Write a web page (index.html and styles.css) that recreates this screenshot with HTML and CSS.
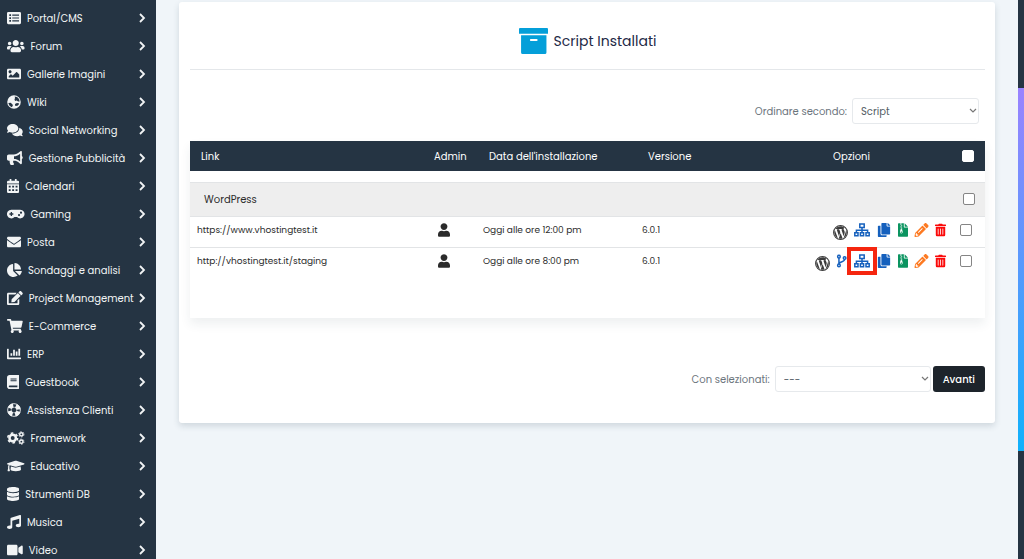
FILE: index.html
```html
<!DOCTYPE html>
<html lang="it">
<head>
<meta charset="utf-8">
<title>Script Installati</title>
<link rel="stylesheet" href="styles.css">
</head>
<body>
<svg class="sprite" aria-hidden="true">
  <symbol id="chevron" viewBox="0 0 8 10"><path d="M2 1l4 4-4 4" fill="none" stroke="currentColor" stroke-width="1.8"/></symbol>
  <symbol id="user" viewBox="0 0 448 512"><path d="M224 256c70.7 0 128-57.3 128-128S294.7 0 224 0 96 57.3 96 128s57.3 128 128 128zm89.6 32h-16.7c-22.2 10.2-46.9 16-72.9 16s-50.6-5.8-72.9-16h-16.7C60.2 288 0 348.2 0 422.4V464c0 26.5 21.5 48 48 48h352c26.5 0 48-21.5 48-48v-41.6c0-74.2-60.2-134.4-134.4-134.4z"/></symbol>
  <symbol id="wordpress" viewBox="0 0 512 512"><path d="M61.7 169.4l101.5 278C92.2 413 43.3 340.2 43.3 256c0-30.9 6.6-60.1 18.4-86.6zm337.9 75.9c0-26.3-9.4-44.5-17.5-58.7-10.8-17.5-20.9-32.4-20.9-49.9 0-19.6 14.8-37.8 35.7-37.8.9 0 1.8.1 2.8.2-37.9-34.7-88.3-55.9-143.7-55.9-74.3 0-139.7 38.1-177.8 95.9 5 .2 9.7.3 13.7.3 22.2 0 56.7-2.7 56.7-2.7 11.5-.7 12.8 16.2 1.4 17.5 0 0-11.5 1.3-24.3 2l77.5 230.4L249.8 247l-33.1-90.8c-11.5-.7-22.3-2-22.3-2-11.5-.7-10.1-18.2 1.3-17.5 0 0 35.1 2.7 56 2.7 22.2 0 56.7-2.7 56.7-2.7 11.5-.7 12.8 16.2 1.4 17.5 0 0-11.5 1.3-24.3 2l76.9 228.7 21.2-70.9c9-29.4 16-50.5 16-68.7zm-139.9 29.3l-63.8 185.5c19.1 5.6 39.2 8.7 60.1 8.7 24.8 0 48.5-4.3 70.6-12.1-.6-.9-1.1-1.9-1.5-2.9l-65.4-179.2zm183-120.7c.9 6.8 1.4 14 1.4 21.9 0 21.6-4 45.8-16.2 76.2l-65 187.9C426.2 403 468.7 334.5 468.7 256c0-37-9.4-71.8-26-102.1z"/><circle cx="256" cy="256" r="236" fill="none" stroke="currentColor" stroke-width="36"/></symbol>
  <symbol id="branch" viewBox="0 0 12 16"><g fill="none" stroke="currentColor" stroke-width="1.7"><circle cx="2.500" cy="3" r="1.500"/><circle cx="2.500" cy="13" r="1.500"/><circle cx="9" cy="4.600" r="1.500"/><path d="M2.500 4.500v7M9 6.100c0 3.600-5.500 1.800-6.500 5.200"/></g></symbol>
  <symbol id="sitemap" viewBox="0 0 16 14"><g fill="none" stroke="currentColor" stroke-width="1.500"><path d="M5.800 1h4.400v3.400H5.800zM.8 9.800h3.200v3H.8zM12 9.800h3.200v3H12zM6.400 9.800h3.200v3H6.400zM8 4.400v5.400M2.400 9.800V7.200h11.200v2.600"/></g></symbol>
  <symbol id="copy" viewBox="0 0 448 512"><path d="M320 448v40c0 13.300-10.700 24-24 24H24c-13.300 0-24-10.700-24-24V120c0-13.300 10.700-24 24-24h72v296c0 30.900 25.100 56 56 56zm0-344V0H152c-13.300 0-24 10.700-24 24v368c0 13.300 10.700 24 24 24h272c13.300 0 24-10.700 24-24V128H344c-13.200 0-24-10.800-24-24zm121-31L375 7a24 24 0 0 0-17-7h-6v96h96v-6a24 24 0 0 0-7-17z"/></symbol>
  <symbol id="zip" viewBox="0 0 384 512"><path fill-rule="evenodd" d="M24 0h72v32h32V0h96v136c0 13 11 24 24 24h136v328c0 13-11 24-24 24H24c-13 0-24-11-24-24V24C0 11 11 0 24 0zm232 0 128 128H256zM96 32v32h32V32zm32 32v32h32V64zM96 96v32h32V96zm32 32v32h32v-32zM96 160v32h32v-32zm32 32v32h32v-32zM96 224l-20 102c-8 38 18 66 52 66s60-28 52-66l-18-84c-2-10-6-18-18-18zm32 88c22 0 34 10 34 26s-14 26-34 26-34-10-34-26 14-26 34-26z"/></symbol>
  <symbol id="pencil" viewBox="0 0 512 512"><path fill-rule="evenodd" d="M498 142l-46 46c-5 5-12 5-17 0L324 77c-5-5-5-12 0-17l46-46c19-19 49-19 68 0l60 60c19 19 19 49 0 68zM284 100L22 362 0 484c-3 16 12 31 28 28l122-21 262-262c5-5 5-12 0-17L301 100c-5-5-12-5-17 0zM124 340l154-154 22 22-154 154zM88 424h48v36l-65 12-31-31 12-65h36z"/></symbol>
  <symbol id="trash" viewBox="0 0 448 512"><path d="M32 464a48 48 0 0 0 48 48h288a48 48 0 0 0 48-48V128H32zm272-256a16 16 0 0 1 32 0v224a16 16 0 0 1-32 0zm-96 0a16 16 0 0 1 32 0v224a16 16 0 0 1-32 0zm-96 0a16 16 0 0 1 32 0v224a16 16 0 0 1-32 0zM432 32H312l-9.400-18.700A24 24 0 0 0 281.100 0H166.800a23.700 23.700 0 0 0-21.400 13.300L136 32H16A16 16 0 0 0 0 48v32a16 16 0 0 0 16 16h416a16 16 0 0 0 16-16V48a16 16 0 0 0-16-16z"/></symbol>
</svg>
<div class="layout">
  <nav class="sidebar" aria-label="Categorie">
    <a href="#"><svg viewBox="0 0 512 512"><path fill-rule="evenodd" d="M48 32h416a48 48 0 0 1 48 48v352a48 48 0 0 1-48 48H48a48 48 0 0 1-48-48V80a48 48 0 0 1 48-48zM84 120v64h64v-64zm0 104v64h64v-64zm0 104v64h64v-64zM192 132v40h248v-40zm0 104v40h248v-40zm0 104v40h248v-40z"/></svg><span>Portal/CMS</span><svg class="chev"><use href="#chevron"/></svg></a>
    <a href="#"><svg viewBox="0 0 640 512"><path d="M96 224c35.300 0 64-28.700 64-64s-28.700-64-64-64-64 28.700-64 64 28.700 64 64 64zm448 0c35.300 0 64-28.700 64-64s-28.700-64-64-64-64 28.700-64 64 28.700 64 64 64zm32 32h-64c-17.600 0-33.500 7.100-45.100 18.600 40.300 22.100 68.900 62 75.100 109.400h66c17.700 0 32-14.300 32-32v-32c0-35.300-28.700-64-64-64zm-256 0c61.900 0 112-50.100 112-112S381.900 32 320 32 208 82.100 208 144s50.100 112 112 112zm76.800 32h-8.300c-20.800 10-43.900 16-68.500 16s-47.600-6-68.500-16h-8.300C179.600 288 128 339.600 128 403.200V432c0 26.500 21.500 48 48 48h288c26.500 0 48-21.500 48-48v-28.800c0-63.600-51.600-115.200-115.200-115.200zm-223.700-13.400C161.500 263.100 145.600 256 128 256H64c-35.300 0-64 28.700-64 64v32c0 17.700 14.300 32 32 32h65.900c6.300-47.400 34.900-87.300 75.200-109.400z"/></svg><span>Forum</span><svg class="chev"><use href="#chevron"/></svg></a>
    <a href="#"><svg viewBox="0 0 512 512"><path d="M464 448H48c-26.500 0-48-21.500-48-48V112c0-26.500 21.500-48 48-48h416c26.500 0 48 21.500 48 48v288c0 26.500-21.500 48-48 48zM112 120c-30.900 0-56 25.100-56 56s25.100 56 56 56 56-25.100 56-56-25.100-56-56-56zM64 384h384V272l-87.500-87.500c-4.700-4.700-12.300-4.700-17 0L208 320l-55.500-55.500c-4.700-4.700-12.300-4.700-17 0L64 336v48z"/></svg><span>Gallerie Imagini</span><svg class="chev"><use href="#chevron"/></svg></a>
    <a href="#"><svg viewBox="0 0 512 512"><path fill-rule="evenodd" d="M256 8a248 248 0 1 1 0 496 248 248 0 0 1 0-496zM280 54l90 20 70 76 24 90-60 0-50-40-60 16-20-60 20-46zM48 290l86-4 70 60 10 50-40 50-80-50zM290 340l40-40 80-10 36 40-60 60-80 10z"/></svg><span>Wiki</span><svg class="chev"><use href="#chevron"/></svg></a>
    <a href="#"><svg viewBox="0 0 576 512"><path d="M416 192c0-88.400-93.100-160-208-160S0 103.600 0 192c0 34.300 14.100 65.900 38 92-13.400 30.200-35.500 54.200-35.800 54.500-2.200 2.300-2.800 5.700-1.500 8.700S4.800 352 8 352c36.600 0 66.900-12.300 88.700-25 32.200 15.700 70.300 25 111.300 25 114.900 0 208-71.600 208-160zm122 220c23.900-26 38-57.700 38-92 0-66.900-53.500-124.200-129.300-148.100.9 6.600 1.300 13.300 1.300 20.100 0 105.900-107.700 192-240 192-10.800 0-21.300-.8-31.700-1.900C207.800 439.600 281.800 480 368 480c41 0 79.100-9.200 111.300-25 21.800 12.700 52.100 25 88.700 25 3.200 0 6.100-1.900 7.300-4.800 1.300-2.900.7-6.300-1.500-8.700-.3-.3-22.400-24.200-35.800-54.500z"/></svg><span>Social Networking</span><svg class="chev"><use href="#chevron"/></svg></a>
    <a href="#"><svg viewBox="0 0 576 512"><path d="M576 240c0-23.600-13-44-32-55.100V32c0-8.700-7-32-32-32-7.100 0-14.200 2.400-20 7l-85 68C364.300 109.200 310.700 128 256 128H64c-35.300 0-64 28.700-64 64v96c0 35.400 28.700 64 64 64h33.700c-1.400 10.500-2.200 21.100-2.200 32 0 39.800 9.300 77.400 25.600 110.900 5.200 10.700 16.500 17.100 28.400 17.100h74.300c26 0 41.700-29.800 25.900-50.600-16.400-21.500-26.200-48.400-26.200-77.400 0-11.100 1.600-21.800 4.400-32H256c54.700 0 108.300 18.800 151 53l85 68a32 32 0 0 0 20 7c24.900 0 32-22.800 32-32V295.100c19-11.100 32-31.500 32-55.100zm-96 141.400L447 355C393 311.800 325.100 288 256 288v-96c69.100 0 137-23.800 191-67l33-26.400v282.800z"/></svg><span>Gestione Pubblicità</span><svg class="chev"><use href="#chevron"/></svg></a>
    <a href="#"><svg viewBox="0 0 448 512"><path fill-rule="evenodd" d="M48 64h48V12c0-7 5-12 12-12h40c7 0 12 5 12 12v52h128V12c0-7 5-12 12-12h40c7 0 12 5 12 12v52h48a48 48 0 0 1 48 48v48H0v-48a48 48 0 0 1 48-48zM0 192h448v272a48 48 0 0 1-48 48H48a48 48 0 0 1-48-48zm64 52v64h70v-64zm125 0v64h70v-64zm125 0v64h70v-64zM64 372v64h70v-64zm125 0v64h70v-64zm125 0v64h70v-64z"/></svg><span>Calendari</span><svg class="chev"><use href="#chevron"/></svg></a>
    <a href="#"><svg viewBox="0 0 640 512"><path fill-rule="evenodd" d="M160 96h320a160 160 0 1 1-114 272h-92A160 160 0 1 1 160 96zm-24 88v48H88v48h48v48h48v-48h48v-48h-48v-48zm304 72a40 40 0 1 0 0 80 40 40 0 0 0 0-80zm72-88a40 40 0 1 0 0 80 40 40 0 0 0 0-80z"/></svg><span>Gaming</span><svg class="chev"><use href="#chevron"/></svg></a>
    <a href="#"><svg viewBox="0 0 512 512"><path d="M502.300 190.800c3.900-3.100 9.700-.2 9.700 4.700V400c0 26.500-21.500 48-48 48H48c-26.500 0-48-21.500-48-48V195.600c0-5 5.700-7.800 9.700-4.700 22.400 17.400 52.100 39.500 154.100 113.600 21.100 15.400 56.700 47.800 92.200 47.600 35.700.3 72-32.800 92.300-47.600 102-74.100 131.600-96.300 154-113.700zM256 320c23.200.4 56.600-29.200 73.400-41.400 132.700-96.300 142.800-104.700 173.400-128.700 5.800-4.500 9.200-11.500 9.200-18.900v-19c0-26.500-21.500-48-48-48H48c-26.500 0-48 21.500-48 48v19c0 7.400 3.400 14.300 9.200 18.900 30.600 23.900 40.700 32.400 173.400 128.700 16.800 12.200 50.200 41.800 73.400 41.400z"/></svg><span>Posta</span><svg class="chev"><use href="#chevron"/></svg></a>
    <a href="#"><svg viewBox="0 0 544 512"><path d="M527.800 288H290.500l158 158c6 6 16 6.500 22.200.7 38.700-36.500 65.300-85.600 73.100-140.900 1.400-9.400-6.500-17.800-16-17.800zM512 223.200C503.700 103.700 408.300 8.300 288.800 0 279.700-.6 272 7.100 272 16.200V240h223.800c9.100 0 16.800-7.700 16.200-16.800zM224 288V50.700c0-9.500-8.400-17.400-17.800-16C87 51.500-4.100 155.600.1 280.400 4.500 408.500 114.800 513.600 243 512c50.400-.6 97-16.900 135.300-44 7.900-5.600 8.400-17.200 1.600-24.100z"/></svg><span>Sondaggi e analisi</span><svg class="chev"><use href="#chevron"/></svg></a>
    <a href="#"><svg viewBox="0 0 576 512"><path d="M402.600 83.200l90.200 90.200c3.800 3.800 3.800 10 0 13.800L274.400 405.600l-92.800 10.300c-12.400 1.400-22.900-9.100-21.500-21.500l10.300-92.800L388.800 83.200c3.800-3.800 10-3.800 13.800 0zm162-22.900l-48.800-48.800c-15.200-15.200-39.900-15.200-55.200 0l-35.400 35.400c-3.800 3.800-3.800 10 0 13.800l90.200 90.200c3.800 3.800 10 3.800 13.800 0l35.400-35.400c15.200-15.300 15.200-40 0-55.200zM384 346.200V448H64V128h229.800c3.200 0 6.200-1.300 8.500-3.500l40-40c7.600-7.600 2.200-20.500-8.500-20.500H48C21.500 64 0 85.500 0 112v352c0 26.500 21.500 48 48 48h352c26.500 0 48-21.500 48-48V306.200c0-10.700-12.900-16-20.500-8.500l-40 40c-2.200 2.300-3.500 5.300-3.500 8.500z"/></svg><span>Project Management</span><svg class="chev"><use href="#chevron"/></svg></a>
    <a href="#"><svg viewBox="0 0 576 512"><path d="M528.100 301.300l47.300-208C578.800 78.300 567.400 64 552 64H159.200L150 19.200C147.800 8 137.900 0 126.500 0H24C10.700 0 0 10.700 0 24v16c0 13.300 10.700 24 24 24h69.900l70.200 343.400C147.300 417.100 136 435.200 136 456c0 30.900 25.100 56 56 56s56-25.100 56-56c0-15.700-6.400-29.800-16.800-40h209.600C430.400 426.200 424 440.300 424 456c0 30.900 25.100 56 56 56s56-25.100 56-56c0-22.200-12.900-41.300-31.600-50.400l5.500-24.300c3.400-15-8-29.300-23.400-29.300H218.100l-6.500-32h293.100c11.200 0 20.900-7.800 23.400-18.700z"/></svg><span>E-Commerce</span><svg class="chev"><use href="#chevron"/></svg></a>
    <a href="#"><svg viewBox="0 0 512 512"><path d="M320 160h64v160h-64zM416 64h64v256h-64zM128 224h64v96h-64zM224 96h64v224h-64zM496 384H64V80c0-8.800-7.200-16-16-16H16C7.200 64 0 71.200 0 80v336c0 17.700 14.300 32 32 32h464c8.800 0 16-7.200 16-16v-32c0-8.800-7.200-16-16-16z"/></svg><span>ERP</span><svg class="chev"><use href="#chevron"/></svg></a>
    <a href="#"><svg viewBox="0 0 448 512"><path d="M448 360V24c0-13.300-10.700-24-24-24H96C43 0 0 43 0 96v320c0 53 43 96 96 96h328c13.300 0 24-10.700 24-24v-16c0-7.500-3.500-14.300-8.900-18.700-4.200-15.400-4.200-59.300 0-74.700 5.400-4.300 8.900-11.100 8.900-18.600zM128 134c0-3.300 2.700-6 6-6h212c3.300 0 6 2.700 6 6v20c0 3.300-2.700 6-6 6H134c-3.300 0-6-2.700-6-6v-20zm0 64c0-3.300 2.700-6 6-6h212c3.300 0 6 2.700 6 6v20c0 3.300-2.700 6-6 6H134c-3.300 0-6-2.700-6-6v-20zm253.400 250H96c-17.700 0-32-14.300-32-32 0-17.600 14.400-32 32-32h285.400c-1.900 17.100-1.900 46.900 0 64z"/></svg><span>Guestbook</span><svg class="chev"><use href="#chevron"/></svg></a>
    <a href="#"><svg viewBox="0 0 512 512"><circle cx="256" cy="256" r="168" fill="none" stroke="currentColor" stroke-width="150" stroke-dasharray="164 99.900" stroke-dashoffset="214"/><circle cx="256" cy="256" r="232" fill="none" stroke="currentColor" stroke-width="32"/><circle cx="256" cy="256" r="104" fill="none" stroke="currentColor" stroke-width="20"/></svg><span>Assistenza Clienti</span><svg class="chev"><use href="#chevron"/></svg></a>
    <a href="#"><svg viewBox="0 0 640 512"><g fill="none" stroke="currentColor"><circle cx="208" cy="256" r="118" stroke-width="92"/><circle cx="208" cy="256" r="180" stroke-width="56" stroke-dasharray="94 94.500"/><circle cx="524" cy="122" r="62" stroke-width="54"/><circle cx="524" cy="122" r="98" stroke-width="32" stroke-dasharray="51 51.600"/><circle cx="524" cy="390" r="62" stroke-width="54"/><circle cx="524" cy="390" r="98" stroke-width="32" stroke-dasharray="51 51.600"/></g></svg><span>Framework</span><svg class="chev"><use href="#chevron"/></svg></a>
    <a href="#"><svg viewBox="0 0 640 512"><path d="M622.300 153.200L343.400 67.500c-15.200-4.700-31.600-4.700-46.800 0L17.700 153.200c-23.600 7.200-23.600 38.400 0 45.600l48.600 14.900c-10.700 13.200-17.200 29.300-17.900 46.900C38.800 266.200 32 276.100 32 288c0 10.800 5.700 19.900 13.900 25.700L20.300 428.500C18.100 438.500 25.700 448 35.900 448H92c10.200 0 17.800-9.500 15.600-19.500L82.100 313.700C90.300 307.900 96 298.800 96 288c0-11.600-6.500-21.300-15.700-26.900.8-15 8.500-28.300 20.700-36.700l195.600 60.100c9.100 2.800 26.400 6.200 46.800 0l278.900-85.700c23.600-7.200 23.600-38.400 0-45.600zM352.800 315.100c-28.500 8.800-52.800 3.900-65.600 0l-145-44.600L128 384c0 35.400 86 64 192 64s192-28.600 192-64l-14.200-113.500z"/></svg><span>Educativo</span><svg class="chev"><use href="#chevron"/></svg></a>
    <a href="#"><svg viewBox="0 0 448 512"><path d="M448 73v46c0 40-100 73-224 73S0 159 0 119V73C0 33 100 0 224 0s224 33 224 73zm0 103v103c0 40-100 73-224 73S0 319 0 279V176c48 33 136 49 224 49s176-16 224-49zm0 160v103c0 40-100 73-224 73S0 479 0 439V336c48 33 136 49 224 49s176-16 224-49z"/></svg><span>Strumenti DB</span><svg class="chev"><use href="#chevron"/></svg></a>
    <a href="#"><svg viewBox="0 0 512 512"><path d="M470.400 1.500L150.400 96A32 32 0 0 0 128 126.500v261.400A139 139 0 0 0 96 384c-53 0-96 28.700-96 64s43 64 96 64 96-28.700 96-64V214.300l256-75v184.600a138.400 138.400 0 0 0-32-3.900c-53 0-96 28.700-96 64s43 64 96 64 96-28.600 96-64V32a32 32 0 0 0-41.600-30.500z"/></svg><span>Musica</span><svg class="chev"><use href="#chevron"/></svg></a>
    <a href="#"><svg viewBox="0 0 576 512"><path d="M336.200 64H47.800C21.400 64 0 85.400 0 111.800v288.400C0 426.600 21.400 448 47.800 448h288.400c26.400 0 47.800-21.400 47.800-47.800V111.800c0-26.400-21.400-47.800-47.800-47.800zm189.400 37.700L416 177.300v157.400l109.600 75.500c21.200 14.600 50.400-.3 50.400-25.800V127.500c0-25.400-29.100-40.400-50.400-25.800z"/></svg><span>Video</span><svg class="chev"><use href="#chevron"/></svg></a>
  </nav>

  <main class="content">
    <section class="card">
      <header class="card-head">
        <svg class="archive" viewBox="0 0 28 25" aria-hidden="true"><path d="M1 0h26a1 1 0 0 1 1 1v4.500H0V1a1 1 0 0 1 1-1z"/><path fill-rule="evenodd" d="M2 7h24.500v16.500a1.500 1.500 0 0 1-1.500 1.500H3.500A1.500 1.500 0 0 1 2 23.500zm9.500 3.500a1 1 0 0 0 0 2h5.500a1 1 0 0 0 0-2z"/></svg>
        <h1>Script Installati</h1>
      </header>
      <div class="sort">
        <label for="sort">Ordinare secondo:</label>
        <span class="select short"><select id="sort"><option>Script</option></select><svg viewBox="0 0 8 6" aria-hidden="true"><path d="M1 1l3 3 3-3"/></svg></span>
      </div>
      <div class="table-box">
        <table>
          <colgroup><col><col class="c-admin"><col class="c-date"><col class="c-version"><col class="c-options"><col class="c-check"></colgroup>
          <thead>
            <tr><th class="first">Link</th><th>Admin</th><th>Data dell'installazione</th><th>Versione</th><th class="center">Opzioni</th><th class="check"><input type="checkbox" aria-label="Seleziona tutto"></th></tr>
          </thead>
          <tbody>
            <tr class="spacer"><td colspan="6"></td></tr>
            <tr class="group"><td colspan="5">WordPress</td><td class="check"><input type="checkbox" aria-label="Seleziona WordPress"></td></tr>
            <tr class="item">
              <td>https://www.vhostingtest.it</td>
              <td class="admin"><a href="#" aria-label="Admin"><svg><use href="#user"/></svg></a></td>
              <td>Oggi alle ore 12:00 pm</td>
              <td>6.0.1</td>
              <td><div class="actions">
                <a class="wp" href="#" aria-label="WordPress"><svg><use href="#wordpress"/></svg></a>
                <a class="blue" href="#" aria-label="Staging"><svg><use href="#sitemap"/></svg></a>
                <a class="blue" href="#" aria-label="Clona"><svg><use href="#copy"/></svg></a>
                <a class="green" href="#" aria-label="Backup"><svg><use href="#zip"/></svg></a>
                <a class="orange" href="#" aria-label="Modifica"><svg><use href="#pencil"/></svg></a>
                <a class="red" href="#" aria-label="Rimuovi"><svg><use href="#trash"/></svg></a>
              </div></td>
              <td class="check"><input type="checkbox" aria-label="Seleziona www.vhostingtest.it"></td>
            </tr>
            <tr class="item">
              <td>http://vhostingtest.it/staging</td>
              <td class="admin"><a href="#" aria-label="Admin"><svg><use href="#user"/></svg></a></td>
              <td>Oggi alle ore 8:00 pm</td>
              <td>6.0.1</td>
              <td><div class="actions">
                <a class="wp" href="#" aria-label="WordPress"><svg><use href="#wordpress"/></svg></a>
                <a class="blue branch" href="#" aria-label="Pubblica"><svg><use href="#branch"/></svg></a>
                <a class="blue marked" href="#" aria-label="Staging"><svg><use href="#sitemap"/></svg></a>
                <a class="blue" href="#" aria-label="Clona"><svg><use href="#copy"/></svg></a>
                <a class="green" href="#" aria-label="Backup"><svg><use href="#zip"/></svg></a>
                <a class="orange" href="#" aria-label="Modifica"><svg><use href="#pencil"/></svg></a>
                <a class="red" href="#" aria-label="Rimuovi"><svg><use href="#trash"/></svg></a>
              </div></td>
              <td class="check"><input type="checkbox" aria-label="Seleziona staging"></td>
            </tr>
          </tbody>
        </table>
      </div>
      <div class="bulk">
        <label for="bulk">Con selezionati:</label>
        <span class="select long"><select id="bulk"><option>---</option></select><svg viewBox="0 0 8 6" aria-hidden="true"><path d="M1 1l3 3 3-3"/></svg></span>
        <button type="button">Avanti</button>
      </div>
    </section>
  </main>
  <div class="edge"></div>
</div>
</body>
</html>
```
FILE: styles.css
```css
* { box-sizing: border-box; }

body {
  margin: 0;
  background: #f0f5f9;
  color: #2b2b2b;
  font: 10px/17px Poppins, Inter, sans-serif;
}

a { color: inherit; text-decoration: none; }
svg { fill: currentColor; display: block; }
.sprite { position: absolute; width: 0; height: 0; }

.layout { display: flex; height: 100vh; overflow: hidden; }

.sidebar {
  flex: none;
  width: 156px;
  padding-top: 4px;
  background: #253443;
  color: #f2f4f5;
}
.sidebar a {
  display: flex;
  align-items: center;
  gap: 6px;
  height: 28px;
  padding: 0 10px 0 7px;
  white-space: nowrap;
}
.sidebar a > svg { flex: none; height: 14px; }
.sidebar span { flex: 1; min-width: 0; }
.sidebar a > .chev { width: 8px; height: 10px; }

.content { flex: 1; min-width: 0; padding: 2px 23px 0 23px; }

.card {
  padding: 0 10px 31px 11px;
  background: #fff;
  border-radius: 3px;
  box-shadow: 0 3px 6px rgba(40, 60, 80, .16);
}

.card-head {
  display: flex;
  align-items: center;
  justify-content: center;
  gap: 6px;
  height: 68px;
  padding-top: 11px;
  border-bottom: 1px solid #e4e7ea;
}
.card-head h1 {
  margin: 0;
  color: #232946;
  font-size: 14px;
  font-weight: 400;
  line-height: 20px;
}
.archive { width: 29px; height: 26px; color: #049fd9; }

.sort, .bulk {
  display: flex;
  align-items: center;
  justify-content: flex-end;
  color: #6c757d;
}
.sort { gap: 5px; padding: 28px 6px 17px 0; }
.bulk { gap: 2px; padding-top: 48px; }
.bulk label { margin-right: 3px; }

.select { position: relative; }
.select select {
  appearance: none;
  width: 100%;
  height: 26px;
  padding: 0 8px;
  border: 1px solid #e6e9ec;
  border-radius: 3px;
  background: #fff;
  color: #555e66;
  font: inherit;
}
.select svg {
  position: absolute;
  right: 2px;
  top: 10px;
  width: 8px;
  height: 6px;
  fill: none;
  stroke: #777;
  stroke-width: 1.2;
  pointer-events: none;
}
.short { width: 127px; }
.long { width: 156px; }

.bulk button {
  height: 26px;
  padding: 0 10px;
  border: 0;
  border-radius: 3px;
  background: #1d242b;
  color: #fff;
  font: 500 10px/17px Poppins, Inter, sans-serif;
}

.table-box {
  padding-bottom: 40px;
  box-shadow: 0 6px 10px rgba(40, 60, 80, .08);
}
table { width: 100%; table-layout: fixed; border-collapse: collapse; }
.c-admin { width: 55px; }
.c-date { width: 159px; }
.c-version { width: 115px; }
.c-options { width: 203px; }
.c-check { width: 32px; }

th {
  height: 30px;
  padding: 0 0 0 13px;
  background: #253443;
  color: #fff;
  font-weight: 400;
  text-align: left;
  white-space: nowrap;
}
th.first { padding-left: 11px; }
th.center { padding: 0; text-align: center; }

td { padding: 0 7px; font-size: 9px; white-space: nowrap; }
.spacer td { height: 11px; padding: 0; }
.group td {
  height: 34px;
  padding-left: 14px;
  background: #eee;
  border-top: 1px solid #e2e4e6;
  border-bottom: 1px solid #e2e4e6;
  font-size: 10px;
}
.item td { height: 31px; padding-bottom: 3px; }
.item + .item td { border-top: 1px solid #e2e4e6; }

.admin svg { width: 12px; height: 14px; margin-left: 10px; }

.actions {
  display: flex;
  align-items: center;
  justify-content: flex-end;
  gap: 6px;
}
.actions svg { width: 16px; height: 14px; }
.actions .wp svg { width: 15px; height: 15px; margin-top: 4px; color: #3c3c3c; }
.actions .branch svg { width: 12px; }
.actions .green svg { width: 10px; }
.actions .orange svg { width: 15px; }
.actions .red svg { width: 11px; }
.blue { color: #1560bd; }
.green { color: #0b9460; }
.orange { color: #fd7a22; }
.red { color: #fb0a0a; }
.marked { outline: 4px solid #f5260f; outline-offset: 3px; }

.check, .group .check, th.check { padding-left: 7px; padding-right: 0; }
.group .check { padding-left: 10px; }
th.check { padding-left: 9px; }
input[type="checkbox"] {
  appearance: none;
  display: block;
  width: 12px;
  height: 12px;
  margin: 0;
  border: 1px solid #858585;
  border-radius: 2px;
  background: #fff;
}
input[type="checkbox"]:checked { background: #1560bd; }
th input[type="checkbox"] { border-color: #fff; }

.edge {
  flex: none;
  width: 6px;
  background:
    linear-gradient(#9a83ff, #10b1fb) 0 88px / 100% 363px no-repeat,
    #253443;
}
```
